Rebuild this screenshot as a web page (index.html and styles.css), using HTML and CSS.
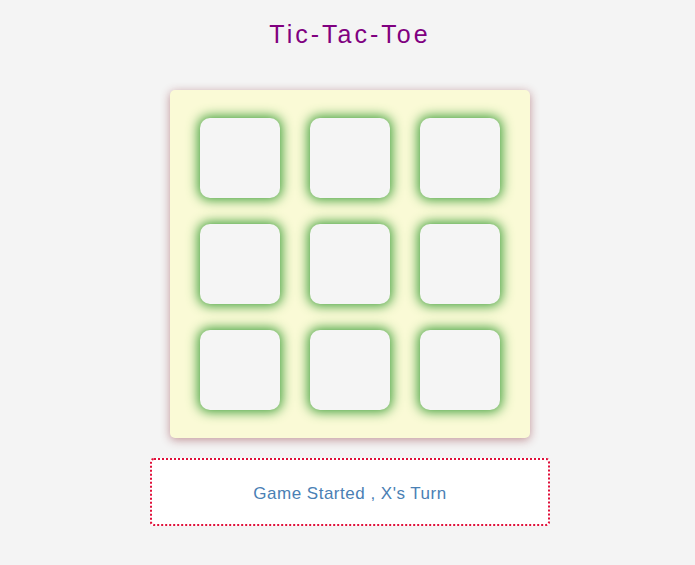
FILE: index.html
```html
<!DOCTYPE html>
<html>
<head>
<meta charset="utf-8">
<link rel="stylesheet" href="styles.css">
</head>
<body>
<div class="page">
  <h1 class="title">Tic-Tac-Toe</h1>
  <div class="board">
    <div class="cell"></div><div class="cell"></div><div class="cell"></div>
    <div class="cell"></div><div class="cell"></div><div class="cell"></div>
    <div class="cell"></div><div class="cell"></div><div class="cell"></div>
  </div>
  <div class="status">Game Started , X's Turn</div>
</div>
</body>
</html>
```
FILE: styles.css
```css
html, body {
  margin: 0;
  padding: 0;
  background: #f4f4f4;
  font-family: "Liberation Sans", Arial, sans-serif;
}
.page {
  display: flex;
  flex-direction: column;
  align-items: center;
  padding-top: 20px;
  padding-left: 5px;
}
.title {
  margin: 0;
  font-size: 25px;
  line-height: 29px;
  font-weight: normal;
  letter-spacing: 3px;
  color: #800080;
}
.board {
  margin-top: 41px;
  width: 360px;
  box-sizing: border-box;
  padding: 28px 30px;
  display: grid;
  grid-template-columns: repeat(3, 80px);
  grid-template-rows: repeat(3, 80px);
  column-gap: 30px;
  row-gap: 26px;
  background: #fafad6;
  border-radius: 5px;
  box-shadow: 0 2px 10px rgba(130, 30, 40, 0.45);
}
.cell {
  background: #f5f5f5;
  border-radius: 10px;
  box-shadow: 0 0 12px 2px #3f9f3a;
}
.status {
  margin-top: 20px;
  width: 400px;
  height: 68px;
  box-sizing: border-box;
  padding-top: 3px;
  border: 2px dotted #e0103a;
  border-radius: 4px;
  background: #ffffff;
  display: flex;
  align-items: center;
  justify-content: center;
  color: #4a80b4;
  font-size: 17px;
  letter-spacing: 0.5px;
}
```
